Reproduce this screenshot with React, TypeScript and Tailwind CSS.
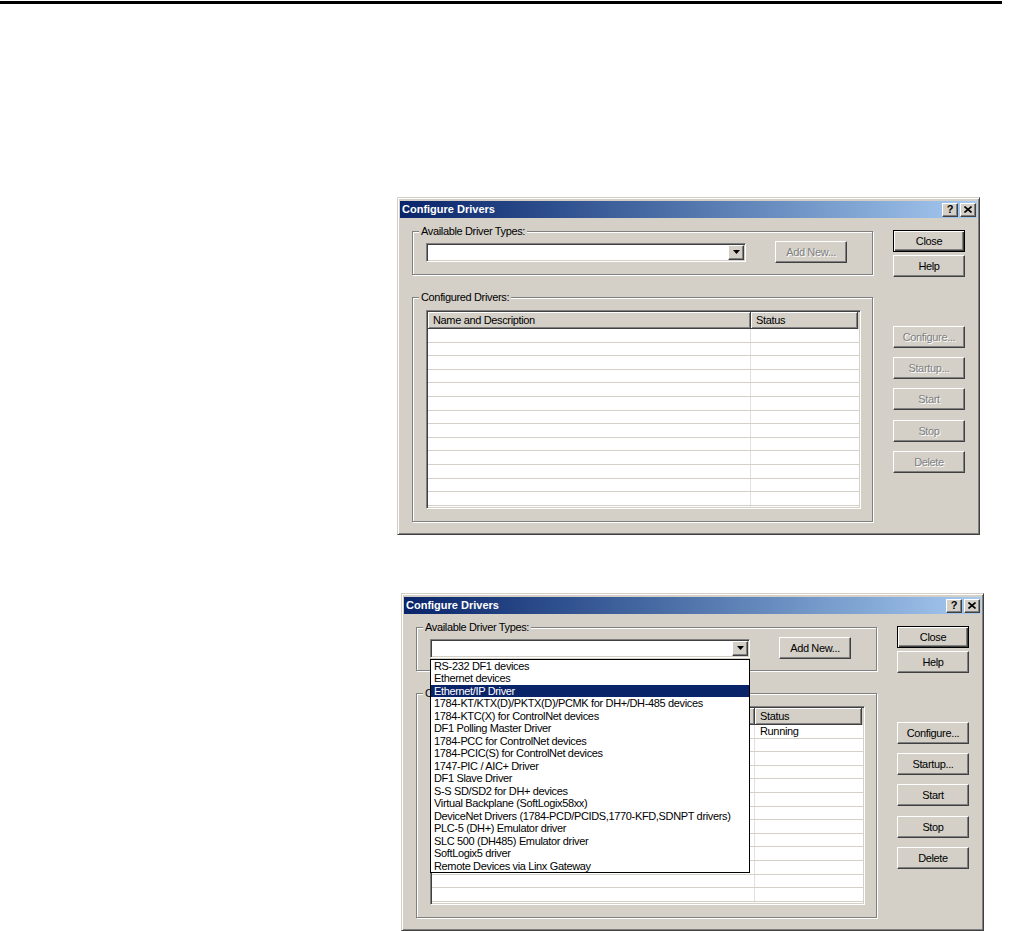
import clsx from 'clsx';

const driverTypes = [
  'RS-232 DF1 devices',
  'Ethernet devices',
  'Ethernet/IP Driver',
  '1784-KT/KTX(D)/PKTX(D)/PCMK for DH+/DH-485 devices',
  '1784-KTC(X) for ControlNet devices',
  'DF1 Polling Master Driver',
  '1784-PCC for ControlNet devices',
  '1784-PCIC(S) for ControlNet devices',
  '1747-PIC / AIC+ Driver',
  'DF1 Slave Driver',
  'S-S SD/SD2 for DH+ devices',
  'Virtual Backplane (SoftLogix58xx)',
  'DeviceNet Drivers (1784-PCD/PCIDS,1770-KFD,SDNPT drivers)',
  'PLC-5 (DH+) Emulator driver',
  'SLC 500 (DH485) Emulator driver',
  'SoftLogix5 driver',
  'Remote Devices via Linx Gateway',
];

const raised =
  'border border-t-white border-l-white border-r-[#404040] border-b-[#404040] shadow-[inset_-1px_-1px_#808080]';
const sunken =
  'border border-t-[#808080] border-l-[#808080] border-r-white border-b-white shadow-[inset_1px_1px_#404040,inset_-1px_-1px_#d4d0c8]';

type BtnProps = { label: string; disabled?: boolean; isDefault?: boolean; className?: string };

const WinButton = ({ label, disabled, isDefault, className }: BtnProps) => (
  <div
    className={clsx(
      'flex h-[22px] w-[72px] items-center justify-center bg-[#d4d0c8]',
      isDefault
        ? 'border border-black shadow-[inset_1px_1px_#fff,inset_-1px_-1px_#404040,inset_-2px_-2px_#808080]'
        : raised,
      className,
    )}
  >
    <span className={disabled ? 'text-[#808080] [text-shadow:1px_1px_0_#fff]' : 'text-black'}>{label}</span>
  </div>
);

const CaptionButton = ({ children }: { children: React.ReactNode }) => (
  <div className={clsx('flex h-[14px] w-[16px] items-center justify-center bg-[#d4d0c8]', raised)}>
    {children}
  </div>
);

// etched frame with the caption sitting on the top line
const GroupBox = ({ title, className, children }: { title: string; className?: string; children: React.ReactNode }) => (
  <div className={clsx('w-[461px] border border-[#808080] shadow-[inset_1px_1px_#fff,1px_1px_#fff]', className)}>
    <div className="-mt-[7px] ml-[6px] h-[13px] w-fit bg-[#d4d0c8] px-[2px] leading-[13px]">{title}</div>
    {children}
  </div>
);

const DriverDialog = ({ open, className }: { open?: boolean; className?: string }) => (
  <div
    className={clsx(
      'h-[338px] w-[583px] overflow-hidden border border-t-[#d4d0c8] border-l-[#d4d0c8] border-r-[#404040] border-b-[#404040] bg-[#d4d0c8] px-[2px] pt-[3px] shadow-[inset_1px_1px_#fff,inset_-1px_-1px_#808080]',
      className,
    )}
  >
    {/* title bar */}
    <div className="flex h-[17px] items-center bg-gradient-to-r from-[#0a246a] to-[#a6caf0] pl-[2px] pr-[1px]">
      <span className="flex-1 text-[11px] font-bold tracking-normal text-white">Configure Drivers</span>
      <div className="flex gap-[2px]">
        <CaptionButton>
          <span className="text-[11px] font-bold leading-none tracking-normal text-black">?</span>
        </CaptionButton>
        <CaptionButton>
          <svg width="8" height="7" viewBox="0 0 8 7">
            <path d="M0.5 0.5 L7.5 6.5 M7.5 0.5 L0.5 6.5" stroke="#000" strokeWidth="1.6" />
          </svg>
        </CaptionButton>
      </div>
    </div>

    <div className="flex items-start pl-[12px] pt-[12px]">
      <div className="flex flex-col">
        <GroupBox title="Available Driver Types:" className="mt-[1px] h-[44px]">
          <div className="mt-[3px] flex h-[22px] items-center pl-[13px]">
            <div className={clsx('relative flex h-[19px] w-[320px] justify-end bg-white p-[1px]', sunken)}>
              <div className={clsx('flex h-full w-[16px] items-center justify-center bg-[#d4d0c8]', raised)}>
                <svg width="7" height="4" viewBox="0 0 7 4">
                  <path d="M0 0 H7 L3.5 4 Z" fill="#000" />
                </svg>
              </div>
              {open && (
                <div className="absolute -left-[1px] top-[19px] z-10 w-[320px] border border-black bg-white">
                  {driverTypes.map((d) => (
                    <div
                      key={d}
                      className={clsx(
                        'h-[12.5px] whitespace-nowrap px-[3px] leading-[12.5px]',
                        d === 'Ethernet/IP Driver' ? 'bg-[#0a246a] text-white' : 'text-black',
                      )}
                    >
                      {d}
                    </div>
                  ))}
                </div>
              )}
            </div>
            <WinButton label="Add New..." disabled={!open} className="ml-[29px]" />
          </div>
        </GroupBox>

        <GroupBox title="Configured Drivers:" className="mt-[22px] h-[225px]">
          <div className="mt-[6px] pl-[13px]">
            <div className={clsx('h-[199px] w-[435px] overflow-hidden bg-white p-[1px]', sunken)}>
              <div className="flex h-[17px] bg-[#d4d0c8]">
                <div className="flex w-[323px] items-center border-r border-b border-r-[#404040] border-b-[#404040] pl-[5px] shadow-[inset_1px_1px_#fff,inset_-1px_-1px_#808080]">
                  {/* hidden under the open drop list */}
                  <span className={open ? 'invisible' : ''}>Name and Description</span>
                </div>
                <div className="flex w-[107px] items-center border-r border-b border-r-[#404040] border-b-[#404040] pl-[5px] shadow-[inset_1px_1px_#fff,inset_-1px_-1px_#808080]">
                  Status
                </div>
              </div>
              {Array.from({ length: 14 }).map((_, i) => (
                <div key={i} className="flex h-[13.6px] border-b border-[#d4d0c8]">
                  <div className="w-[323px] border-r border-[#e0e0e0]" />
                  <div className="w-[107px] pl-[5px] leading-[13px]">{open && i === 0 ? 'Running' : ''}</div>
                </div>
              ))}
            </div>
          </div>
        </GroupBox>
      </div>

      <div className="ml-[20px] flex flex-col">
        <WinButton label="Close" isDefault />
        <WinButton label="Help" className="mt-[3px]" />
        <WinButton label="Configure..." disabled={!open} className="mt-[49px]" />
        <WinButton label="Startup..." disabled={!open} className="mt-[9px]" />
        <WinButton label="Start" disabled={!open} className="mt-[9px]" />
        <WinButton label="Stop" disabled={!open} className="mt-[10px]" />
        <WinButton label="Delete" disabled={!open} className="mt-[9px]" />
      </div>
    </div>
  </div>
);

export default function App() {
  return (
    <div className="h-[931px] w-[1009px] overflow-hidden bg-white font-['Liberation_Sans',Arial,sans-serif] text-[11px] tracking-[-0.35px] text-black">
      <div className="mt-[1px] h-[3px] w-[1002px] bg-black" />
      <DriverDialog className="ml-[397px] mt-[193px]" />
      <DriverDialog open className="ml-[401px] mt-[58px]" />
    </div>
  );
}
